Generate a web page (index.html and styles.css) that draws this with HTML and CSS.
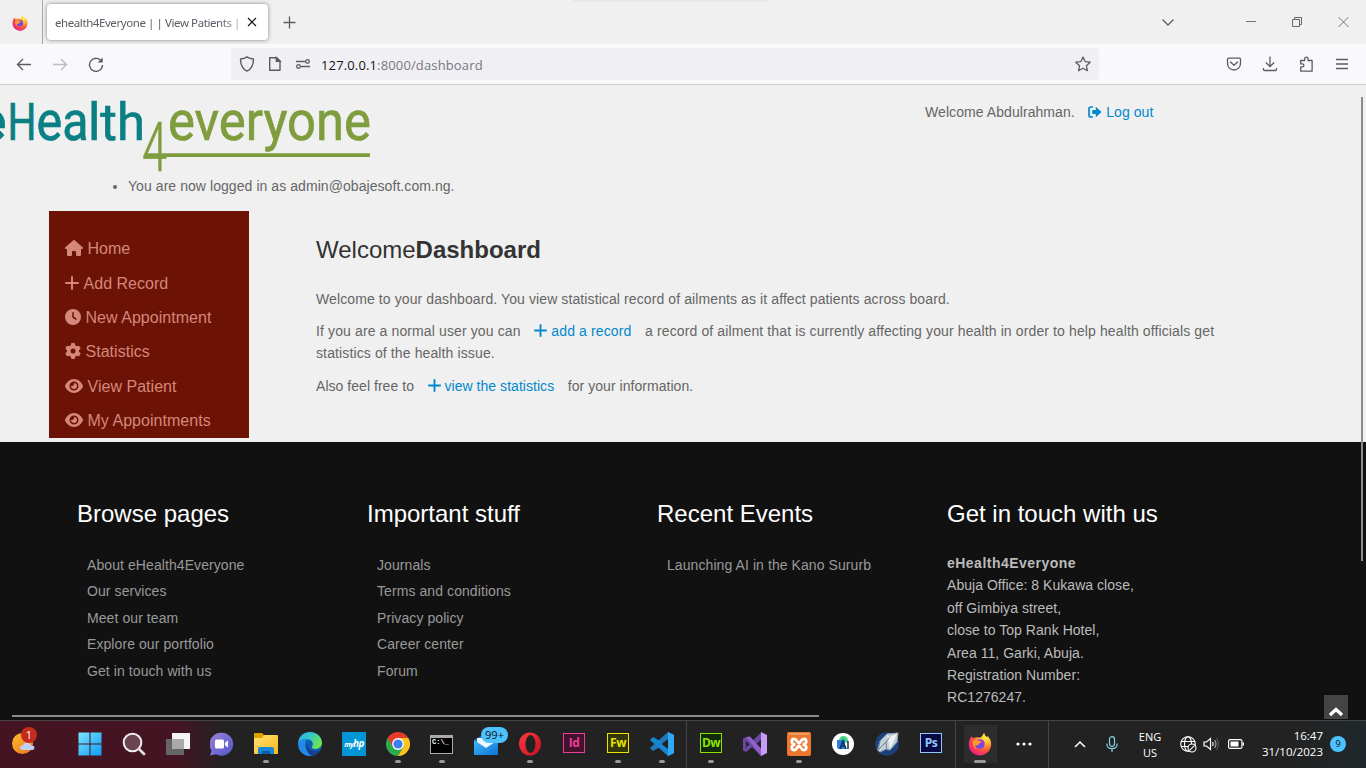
FILE: index.html
```html
<!DOCTYPE html>
<html lang="en">
<head>
<meta charset="utf-8">
<title>ehealth4Everyone | | View Patients</title>
<link rel="stylesheet" href="styles.css">
</head>
<body>
<svg class="defs" width="0" height="0" aria-hidden="true">
  <defs>
    <radialGradient id="fxBody" cx=".75" cy=".2" r=".95"><stop offset="0" stop-color="#fff14a"/><stop offset=".3" stop-color="#ffb52c"/><stop offset=".6" stop-color="#ff553f"/><stop offset="1" stop-color="#e9128a"/></radialGradient>
    <linearGradient id="fxCore" x1="0" y1="1" x2="1" y2="0"><stop offset="0" stop-color="#5a4fe0"/><stop offset="1" stop-color="#a83ad6"/></linearGradient>
    <linearGradient id="winG" x1="0" y1="0" x2="1" y2="1"><stop offset="0" stop-color="#7be6ff"/><stop offset="1" stop-color="#0f9af5"/></linearGradient>
    <linearGradient id="edgeA" x1="0" y1="0" x2="1" y2=".5"><stop offset="0" stop-color="#2aaee8"/><stop offset=".5" stop-color="#36c6c8"/><stop offset="1" stop-color="#69e64d"/></linearGradient>
    <linearGradient id="folderG" x1="0" y1="0" x2="1" y2="1"><stop offset="0" stop-color="#ffe17a"/><stop offset="1" stop-color="#fdb913"/></linearGradient>
    <linearGradient id="sunG" x1="0" y1="0" x2="1" y2="1"><stop offset="0" stop-color="#fbbc2c"/><stop offset="1" stop-color="#ec7420"/></linearGradient>
    <linearGradient id="chatG" x1="0" y1="0" x2="1" y2="1"><stop offset="0" stop-color="#9d7fd8"/><stop offset="1" stop-color="#5059c9"/></linearGradient>
    <linearGradient id="opG" x1="0" y1="0" x2="1" y2="1"><stop offset="0" stop-color="#ff3b45"/><stop offset="1" stop-color="#c2101f"/></linearGradient>
    <linearGradient id="mailG" x1="0" y1="0" x2="1" y2="1"><stop offset="0" stop-color="#40b8f5"/><stop offset="1" stop-color="#0c74d6"/></linearGradient>
    <symbol id="firefox" viewBox="0 0 24 24">
      <path fill="url(#fxBody)" d="M3.500 4.200 5.600 6.300C7 5.200 8.300 5 9.600 5.400c1 .2 2.300.3 3.600-.5C14.600 3.900 15 2.200 16.200.6c.2 2.300 1.400 3.400 2.800 4.600l.7-1.300c2.300 2.400 3.700 5.200 3.500 8.700C22.900 18.900 18.100 23.500 12 23.500S.8 18.900.8 12.800c0-3.500 1-6.300 2.700-8.600Z"/>
      <circle cx="12" cy="12" r="4.800" fill="url(#fxCore)"/>
      <path fill="#ff9a2b" d="M5 8.600c2.300-1.100 4.200-.6 5.700.2 1.500 0 2.900.1 2.600 1.100-.5 1-2.300 1-2.600 2-.3 1.600-2 1.800-3.400.9-.5 2.200.2 3.800 2.200 5C6.300 17 4 12.500 5 8.600Z"/>
    </symbol>
    <symbol id="plus" viewBox="0 0 14 14"><path d="M7 1v12M1 7h12" fill="none" stroke="currentColor" stroke-width="2" stroke-linecap="round"/></symbol>
    <symbol id="eye" viewBox="0 0 576 512"><path fill="currentColor" d="M288 32c-80.8 0-145.5 36.800-192.600 80.600C48.600 156 17.300 208 2.500 243.700c-3.300 7.900-3.300 16.700 0 24.600C17.300 304 48.600 356 95.400 399.400C142.500 443.200 207.200 480 288 480s145.500-36.800 192.600-80.600c46.800-43.500 78.100-95.400 93-131.100c3.300-7.900 3.300-16.700 0-24.600c-14.900-35.700-46.200-87.700-93-131.100C433.500 68.800 368.800 32 288 32zM144 256a144 144 0 1 1 288 0 144 144 0 1 1 -288 0zm144-64c0 35.300-28.700 64-64 64c-7.100 0-13.900-1.200-20.300-3.300c-5.500-1.800-11.900 1.600-11.700 7.400c.3 6.900 1.300 13.800 3.200 20.700c13.700 51.200 66.400 81.600 117.600 67.900s81.600-66.400 67.900-117.600c-11.100-41.500-47.800-69.400-88.600-71.100c-5.800-.2-9.200 6.100-7.400 11.700c2.100 6.400 3.300 13.200 3.300 20.300z"/></symbol>
  </defs>
</svg>

<header class="tabbar">
  <div class="pinned"><svg width="16" height="16"><use href="#firefox"/></svg></div>
  <div class="tab"><span class="tab-title">ehealth4Everyone | | View Patients |</span>
    <svg width="10" height="10" viewBox="0 0 10 10"><path d="M1 1l8 8M9 1 1 9" stroke="#15141a" stroke-width="1.200"/></svg></div>
  <svg class="newtab" width="13" height="13" viewBox="0 0 13 13"><path d="M6.500.5v12M.5 6.500h12" stroke="#5b5b66" stroke-width="1.300"/></svg>
  <div class="topline"></div>
  <div class="wincontrols">
    <svg width="14" height="14" viewBox="0 0 14 14"><path d="m1.500 4.500 5.500 5.500 5.500-5.500" fill="none" stroke="#5b5b66" stroke-width="1.300"/></svg>
    <svg width="10" height="14" viewBox="0 0 10 14"><path d="M0 6.500h10" stroke="#777" /></svg>
    <svg width="10" height="14" viewBox="0 0 10 14"><path d="M.5 4.500h7v7h-7zM2.500 4.500v-2h7v7h-2" fill="none" stroke="#666"/></svg>
    <svg width="11" height="14" viewBox="0 0 11 14"><path d="m.5 2 10 10M10.500 2l-10 10" stroke="#777"/></svg>
  </div>
</header>

<nav class="toolbar">
  <div class="navbuttons">
    <svg width="16" height="16" viewBox="0 0 16 16" fill="none" stroke="#5b5b66" stroke-width="1.400"><path d="M15 8.500H1.500M7 3 1.500 8.500 7 14"/></svg>
    <svg width="16" height="16" viewBox="0 0 16 16" fill="none" stroke="#bcbcc2" stroke-width="1.400"><path d="M1 8.500h13.500M9 3l5.500 5.500L9 14"/></svg>
    <svg width="16" height="16" viewBox="0 0 16 16" fill="none" stroke="#5b5b66" stroke-width="1.400"><path d="M13.600 5.500A6.500 6.500 0 1 0 14.500 9"/><path d="M14.700 1.500v5h-5z" fill="#5b5b66" stroke="none"/></svg>
  </div>
  <div class="urlbar">
    <svg width="16" height="16" viewBox="0 0 16 16" fill="none" stroke="#5b5b66" stroke-width="1.400"><path d="M8 .9c1.800 1.400 4 2 6.500 2.100 0 6-1.800 10-6.500 12.100C3.300 13 1.500 9 1.500 3 4 2.900 6.200 2.300 8 .9Z" stroke-linejoin="round"/></svg>
    <svg width="16" height="16" viewBox="0 0 16 16" fill="none" stroke="#5b5b66" stroke-width="1.400"><path d="M2.700 1.700h7l3.300 3.300v9.300H2.700Z" stroke-linejoin="round"/><path d="M9.300 1.700v3.600H13z" fill="#5b5b66"/></svg>
    <svg width="16" height="16" viewBox="0 0 16 16" fill="none" stroke="#5b5b66" stroke-width="1.300"><path d="M1 5.500h9M6 10.500h9"/><circle cx="12.500" cy="5.500" r="1.800"/><circle cx="3.500" cy="10.500" r="1.800"/></svg>
    <span class="url"><b>127.0.0.1</b>:8000/dashboard</span>
    <svg class="star" width="16" height="16" viewBox="0 0 16 16" fill="none" stroke="#5b5b66" stroke-width="1.300" stroke-linejoin="round"><path d="m8 1 2.100 4.600 5.100.6-3.800 3.500 1 5L8 12.200l-4.400 2.500 1-5L.8 6.200l5.100-.6z"/></svg>
  </div>
  <div class="tools">
    <svg width="16" height="16" viewBox="0 0 16 16" fill="none" stroke="#5b5b66" stroke-width="1.300" stroke-linejoin="round"><path d="M2.500 2.200h11q1 0 1 1V7.500a6.500 6.500 0 0 1-13 0V3.200q0-1 1-1Z"/><path d="m4.500 6 3.500 3.300L11.500 6" stroke-linecap="round"/></svg>
    <svg width="16" height="16" viewBox="0 0 16 16" fill="none" stroke="#5b5b66" stroke-width="1.300"><path d="M8 .5v10M3.800 6.500 8 10.700l4.200-4.200M1.500 12v1.500q0 1 1 1h11q1 0 1-1V12"/></svg>
    <svg width="16" height="16" viewBox="0 0 16 16" fill="none" stroke="#5b5b66" stroke-width="1.300" stroke-linejoin="round"><path d="M2.700 4.500h4V2.800a1.700 1.700 0 0 1 3.400 0v1.700h4v10.700H2.700v-4.300h1.700a1.500 1.500 0 0 0 0-3H2.700Z"/></svg>
    <svg width="16" height="16" viewBox="0 0 16 16" stroke="#5b5b66" stroke-width="1.300"><path d="M2 3.500h12M2 8h12M2 12.500h12"/></svg>
  </div>
</nav>

<main class="page">
  <section class="masthead">
    <svg class="logo" width="372" height="92" viewBox="0 0 372 92">
      <g fill="#0b8084" stroke="#0b8084" stroke-width=".7">
        <text class="mark bold" x="-23" y="55" textLength="29" lengthAdjust="spacingAndGlyphs">e</text>
        <text class="mark cap" x="7.500" y="55" textLength="29" lengthAdjust="spacingAndGlyphs">H</text>
        <text class="mark" x="36.500" y="55" textLength="52" lengthAdjust="spacingAndGlyphs">ea</text>
        <text class="mark tall" x="88" y="55" textLength="57" lengthAdjust="spacingAndGlyphs">lth</text>
      </g>
      <g fill="#7f9d3e" stroke="#7f9d3e" stroke-width=".7">
        <text class="mark four" x="142" y="85.500" textLength="25" lengthAdjust="spacingAndGlyphs">4</text>
        <text class="mark" x="168" y="55" textLength="203" lengthAdjust="spacingAndGlyphs">everyone</text>
        <path d="M146 70.200H370" stroke-width="3.800"/>
      </g>
    </svg>
    <div class="account">Welcome Abdulrahman.
      <a class="logout"><svg width="14" height="12" viewBox="0 0 14 12"><path d="M5 1H3Q1 1 1 3v6q0 2 2 2h2" fill="none" stroke="currentColor" stroke-width="1.700"/><path d="M4.300 4h3.500V.8L13.500 6 7.800 11.200V8H4.300z" fill="currentColor"/></svg>Log out</a></div>
  </section>
  <ul class="messages"><li>You are now logged in as admin@obajesoft.com.ng.</li></ul>
  <section class="body">
    <aside class="sidebar">
      <a><svg width="18" height="16" viewBox="0 0 576 512"><path fill="currentColor" d="M575.800 255.500c0 18-15 32.100-32 32.100h-32l.7 160.200c0 2.700-.2 5.400-.5 8.100V472c0 22.100-17.900 40-40 40H392c-22.100 0-40-17.900-40-40V384c0-17.700-14.300-32-32-32H256c-17.700 0-32 14.300-32 32v88c0 22.100-17.900 40-40 40H104c-22.100 0-40-17.900-40-40V287.600H32c-18 0-32-14-32-32.100c0-9 3-17 10-24L266.400 8c7-7 15-8 22-8s15 2 21 7L564.800 231.500c8 7 12 15 11 24z"/></svg>Home</a>
      <a><svg class="low" width="14" height="14"><use href="#plus"/></svg>Add Record</a>
      <a><svg width="16" height="16" viewBox="0 0 512 512"><path fill="currentColor" d="M256 0a256 256 0 1 1 0 512A256 256 0 1 1 256 0zM232 120V256c0 8 4 15.500 10.700 20l96 64c11 7.400 25.900 4.400 33.300-6.700s4.400-25.900-6.700-33.300L280 243.200V120c0-13.300-10.700-24-24-24s-24 10.700-24 24z"/></svg>New Appointment</a>
      <a><svg width="16" height="16" viewBox="0 0 512 512"><path fill="currentColor" d="M495.900 166.600c3.200 8.700 .5 18.400-6.400 24.600l-43.300 39.400c1.100 8.300 1.700 16.800 1.700 25.400s-.6 17.100-1.700 25.400l43.300 39.400c6.900 6.200 9.600 15.900 6.400 24.600c-4.400 11.900-9.700 23.300-15.800 34.300l-4.700 8.100c-6.600 11-14 21.400-22.100 31.200c-5.900 7.200-15.700 9.600-24.500 6.800l-55.700-17.700c-13.400 10.300-28.200 18.900-44 25.400l-12.500 57.100c-2 9.100-9 16.300-18.200 17.800c-13.800 2.300-28 3.500-42.500 3.500s-28.700-1.200-42.500-3.500c-9.200-1.500-16.200-8.700-18.200-17.800l-12.500-57.100c-15.800-6.500-30.600-15.100-44-25.400L83.100 425.900c-8.800 2.800-18.600 .3-24.500-6.800c-8.100-9.800-15.500-20.200-22.100-31.200l-4.700-8.100c-6.100-11-11.400-22.400-15.800-34.300c-3.200-8.700-.5-18.400 6.400-24.600l43.300-39.400C64.600 273.100 64 264.600 64 256s.6-17.100 1.700-25.400L22.400 191.200c-6.900-6.200-9.600-15.900-6.400-24.600c4.400-11.900 9.700-23.300 15.800-34.300l4.700-8.100c6.600-11 14-21.400 22.100-31.200c5.900-7.200 15.700-9.600 24.500-6.800l55.700 17.700c13.400-10.300 28.200-18.900 44-25.400l12.500-57.100c2-9.100 9-16.300 18.200-17.800C227.300 1.200 241.500 0 256 0s28.700 1.200 42.500 3.500c9.200 1.500 16.200 8.700 18.200 17.800l12.500 57.100c15.800 6.500 30.600 15.100 44 25.400l55.700-17.700c8.800-2.800 18.600-.3 24.500 6.800c8.100 9.800 15.500 20.200 22.100 31.200l4.700 8.100c6.100 11 11.400 22.400 15.800 34.300zM256 336a80 80 0 1 0 0-160 80 80 0 1 0 0 160z"/></svg>Statistics</a>
      <a><svg width="18" height="16"><use href="#eye"/></svg>View Patient</a>
      <a><svg width="18" height="16"><use href="#eye"/></svg>My Appointments</a>
    </aside>
    <article class="content">
      <h1>Welcome<strong>Dashboard</strong></h1>
      <p>Welcome to your dashboard. You view statistical record of ailments as it affect patients across board.</p>
      <p class="wide">If you are a normal user you can <a><svg width="13" height="13"><use href="#plus"/></svg> add a record</a> a record of ailment that is currently affecting your health in order to help health officials get statistics of the health issue.</p>
      <p class="tight">Also feel free to <a><svg width="13" height="13"><use href="#plus"/></svg> view the statistics</a> for your information.</p>
    </article>
  </section>
  <footer class="footer">
    <section><h2>Browse pages</h2><ul><li>About eHealth4Everyone</li><li>Our services</li><li>Meet our team</li><li>Explore our portfolio</li><li>Get in touch with us</li></ul></section>
    <section><h2>Important stuff</h2><ul><li>Journals</li><li>Terms and conditions</li><li>Privacy policy</li><li>Career center</li><li>Forum</li></ul></section>
    <section><h2>Recent Events</h2><ul><li>Launching AI in the Kano Sururb</li></ul></section>
    <section><h2>Get in touch with us</h2><address><strong>eHealth4Everyone</strong><br>Abuja Office: 8 Kukawa close,<br>off Gimbiya street,<br>close to Top Rank Hotel,<br>Area 11, Garki, Abuja.<br>Registration Number:<br>RC1276247.</address></section>
  </footer>
  <div class="vscroll"></div><div class="hscroll"></div>
  <div class="totop"><svg width="16" height="12" viewBox="0 0 16 12"><path d="m2 9 6-5.500L14 9" fill="none" stroke="#fff" stroke-width="3.200"/></svg></div>
</main>

<footer class="taskbar">
  <div class="weather"><svg width="28" height="30" viewBox="0 0 28 30"><circle cx="11.500" cy="15.500" r="10.500" fill="url(#sunG)"/><path d="M11.500 22q-2.500 0-2.500-2.300t3-2.400q1.500-3.800 5-2.800 2.300.6 3 3 3.500 0 3.500 2.300T21 22z" fill="#bfd0f5"/></svg><span class="count">1</span></div>
  <div class="apps">
    <div class="app"><svg width="24" height="24" viewBox="0 0 24 24"><path fill="url(#winG)" d="M.5.500h11v11H.5zm12 0h11v11h-11zM.5 12.500h11v11H.5zm12 0h11v11h-11z"/></svg></div>
    <div class="app"><svg width="24" height="24" viewBox="0 0 24 24"><circle cx="10.500" cy="10.500" r="8.800" fill="#6c4350" stroke="#eee" stroke-width="2"/><path d="m17 17 5 5" stroke="#ddd" stroke-width="2.800" stroke-linecap="round"/></svg></div>
    <div class="app"><svg width="24" height="24" viewBox="0 0 24 24"><path fill="#f4f4f4" d="M6 1h18v16H6z"/><path fill="#666" d="M0 7h18v16H0z"/><path fill="#aaa" d="M6 7h12v10H6z"/></svg></div>
    <div class="app"><svg width="24" height="24" viewBox="0 0 24 24"><path fill="url(#chatG)" d="M12 .7a11.500 11.500 0 1 1-6 21.500L0 23.500l1.500-5A11.500 11.500 0 0 1 12 .7Z"/><rect x="5" y="7.500" width="9" height="9" rx="1.500" fill="#fff"/><path d="m15 10.800 3-2.300v7l-3-2.300z" fill="#fff"/></svg></div>
    <div class="app run"><svg width="26" height="24" viewBox="0 0 26 24"><path fill="#dfa100" d="M1 2q0-1 1-1h7l2 2v5H1z"/><path fill="url(#folderG)" d="M1 6h8l2-3h13q1 0 1 1v17q0 1-1 1H2q-1 0-1-1z"/><path fill="#1687d9" d="M5 22v-5q0-2 2-2h12q2 0 2 2v5z"/><path fill="#0b60a8" d="M9 19h8v3H9z"/></svg></div>
    <div class="app"><svg width="24" height="24" viewBox="0 0 24 24"><circle cx="12" cy="12" r="12" fill="#0d5fb5"/><path fill="url(#edgeA)" d="M.2 10.500C1 4 6 0 12 0c7 0 12 5.200 12 10.800 0 4-3.200 6.200-6.500 6.200-3 0-4.200-1.500-3.200-2.800 1.600-2.200.2-5.700-3.500-6.600C6.500 6.500 2 8 .2 10.500Z"/><path fill="#218be5" d="M.2 10.500C2 8 5.500 7 9 7.400 5.700 10 6.500 18 14 23.800 6 25-.5 19 .2 10.500Z"/><path fill="#173f8f" d="M9.500 11c-1 5 4 9.300 12 7.500-2 3.300-4.500 4.800-7.500 5.300C7.500 20.500 7 14 9.500 11Z"/></svg></div>
    <div class="app"><span class="hp"><small>my</small>hp</span></div>
    <div class="app run"><svg width="24" height="24" viewBox="0 0 24 24"><path d="M12 12 1.600 6A12 12 0 0 1 22.400 6z" fill="#e33b2e"/><path d="M12 12v12A12 12 0 0 1 1.600 6z" fill="#2da94f"/><path d="M1.600 6 7 15l5-9z" fill="#e33b2e"/><path d="m12 24 5.200-9H7z" fill="#2da94f"/><path d="m17.200 15-5.200 9a12 12 0 0 0 10.400-18H12z" fill="#fcc31e"/><circle cx="12" cy="12" r="5.900" fill="#fff"/><circle cx="12" cy="12" r="4.600" fill="#3d7ff0"/></svg></div>
    <div class="app run"><span class="cmd">C:\_</span></div>
    <div class="app mail"><svg width="26" height="24" viewBox="0 0 26 24"><path fill="#136fc0" d="M1 8 13 1l12 7v15H1z"/><path fill="#eef7ff" d="M4 6h18v8l-9 4-9-6z"/><path fill="url(#mailG)" d="m1 8 12 8 12-8v15H1z"/></svg><span class="badge">99+</span></div>
    <div class="app run"><svg width="24" height="24" viewBox="0 0 24 24"><ellipse cx="12" cy="12" rx="11" ry="11.500" fill="url(#opG)"/><ellipse cx="12.500" cy="12" rx="5" ry="9" fill="#222"/></svg></div>
    <div class="app"><span class="adobe id">Id</span></div>
    <div class="app run"><span class="adobe fw">Fw</span></div>
    <div class="app run"><svg width="24" height="24" viewBox="0 0 24 24"><path fill="#1f79bf" d="m18 0 6 3v4L3 19 0 16z"/><path fill="#1688d2" d="M18 24 0 8l3-3 21 12v4z"/><path fill="#2faaf2" d="m18 0 6 3v18l-6 3z"/><path d="m18 7-6.500 5 6.500 5z" fill="#222"/></svg></div>
    <i class="sep"></i>
    <div class="app run"><span class="adobe dw">Dw</span></div>
    <div class="app"><svg width="24" height="24" viewBox="0 0 24 24"><path fill="#6a47a0" d="M0 6.500 3 5l4.500 1L20 18l-2 6L3 9v6.500l15-15V8L3 20l-3-1.500z"/><path fill="#8f62c9" d="m3 5 4-.5L20 19l-2 5z"/><path fill="#c79cf5" d="m18 0 6 3v18l-6 3z"/></svg></div>
    <div class="app run"><svg width="24" height="24" viewBox="0 0 24 24"><rect width="24" height="24" rx="2" fill="#ed772d"/><path fill="#f39b67" d="M1 1h22l-2 2H3z"/><path d="M8.500 12.500C4 12.500 3.500 7 7 7s3 4 5 4 1.500-4 5-4 3 5.500-1.500 5.500c4.500 0 5 5.500 1.500 5.500s-3-4-5-4-1.500 4-5 4-3-5.500 1.500-5.500Z" fill="none" stroke="#fff" stroke-width="2.800"/></svg></div>
    <div class="app"><svg width="22" height="22" viewBox="0 0 22 22"><circle cx="11" cy="11" r="11" fill="#fff"/><path d="M7 8a4.500 4.500 0 0 1 9-1v3z" fill="#43d681"/><path d="M5 7h8v9H7q-2 0-2-2z" fill="#2c7be5"/><path d="m8 16 3-8 3 8M9 13h4M16 8v8" fill="none" stroke="#123052" stroke-width="1.500"/></svg></div>
    <div class="app"><svg width="26" height="24" viewBox="0 0 26 24"><circle cx="13" cy="12" r="11.800" fill="#1d417d"/><path d="m3.500 18 2.500-9 7-7 11-1-1 9-7 8-4-1-6 3z" fill="#c3d0da" stroke="#8fa3b5"/><path d="m13 2 2.500 3.500L23.500 1 16 17z" fill="#eef3f6"/><path d="M6 9 4 18l8-8 3.500-4.500M12 10l.5 7" stroke="#6c8094" fill="none"/></svg></div>
    <div class="app"><span class="adobe ps">Ps</span></div>
    <i class="sep"></i>
    <div class="app active run"><svg width="24" height="24"><use href="#firefox"/></svg></div>
    <div class="app"><svg width="16" height="4" viewBox="0 0 16 4" fill="#fff"><circle cx="2" cy="2" r="1.600"/><circle cx="8" cy="2" r="1.600"/><circle cx="14" cy="2" r="1.600"/></svg></div>
    <i class="sep"></i>
  </div>
  <div class="tray">
    <svg class="chev" width="12" height="8" viewBox="0 0 12 8"><path d="m1 7 5-5 5 5" fill="none" stroke="#fff" stroke-width="1.500"/></svg>
    <svg class="mic" width="12" height="16" viewBox="0 0 12 16" fill="none" stroke="#84cfe3" stroke-width="1.200"><rect x="3.500" y=".7" width="5" height="9.600" rx="2.500"/><path d="M.8 7.500Q.8 12.700 6 12.700T11.200 7.500M6 12.700V16"/></svg>
    <div class="lang">ENG<br>US</div>
    <svg class="globe" width="17" height="17" viewBox="0 0 17 17" fill="none" stroke="#fff" stroke-width="1.100"><circle cx="8" cy="8" r="7.300"/><ellipse cx="8" cy="8" rx="3.500" ry="7.300"/><path d="M1.200 5.500h13.600M1.200 10.500h13.600"/><circle cx="12" cy="12" r="4" fill="#222"/><path d="m9.300 14.700 5.400-5.400"/></svg>
    <svg class="vol" width="17" height="14" viewBox="0 0 17 14" fill="none" stroke="#fff" stroke-width="1.200"><path d="M1 5h2.500L7.500 1.500v11L3.500 9H1zM9.500 5q1.500 2 0 4"/><path d="M11.500 3q3 4 0 8" stroke="#aaa"/><path d="M13.500 1q4 6 0 12" stroke="#555"/></svg>
    <svg class="bat" width="17" height="10" viewBox="0 0 17 10"><rect x=".6" y=".6" width="13.300" height="8.800" rx="1.500" fill="none" stroke="#fff" stroke-width="1.200"/><path fill="#fff" d="M2.500 2.500h8v5h-8zM14.500 3.500H16v3h-1.500z"/></svg>
    <div class="clock">16:47<br>31/10/2023</div>
    <span class="notif">9</span>
  </div>
</footer>
</body>
</html>
```
FILE: styles.css
```css
* { box-sizing: border-box; }
body {
  margin: 0;
  width: 1366px;
  height: 768px;
  overflow: hidden;
  display: flex;
  flex-direction: column;
  font-family: "Liberation Sans", Arial, sans-serif;
}
.defs { position: absolute; }
svg { flex: none; }

/* Browser window */
.tabbar {
  position: relative;
  display: flex;
  align-items: center;
  height: 44px;
  flex: none;
  background: #f0f0f0;
  font-family: "Noto Sans", sans-serif;
}
.pinned {
  width: 43px;
  height: 44px;
  padding: 14px 0 0 12px;
  border-right: 1px solid #aaa;
}
.tab {
  display: flex;
  align-items: center;
  width: 221px;
  height: 36px;
  margin-left: 4px;
  padding: 0 11px 0 8px;
  border-radius: 4px;
  background: #fff;
  box-shadow: 0 0 4px rgba(0, 0, 0, .45);
}
.tab-title {
  width: 192px;
  overflow: hidden;
  white-space: nowrap;
  font-size: 11.5px;
  letter-spacing: -.42px;
  color: #5b5b66;
  -webkit-mask-image: linear-gradient(90deg, #000 165px, transparent 200px);
  mask-image: linear-gradient(90deg, #000 165px, transparent 200px);
}
.newtab { margin-left: 15px; }
.topline {
  position: absolute;
  left: 572px;
  top: 0;
  width: 196px;
  height: 2px;
  background: #e9e9e9;
  border-radius: 0 0 3px 3px;
}
.wincontrols {
  display: flex;
  margin-left: auto;
  padding-right: 17px;
  align-items: center;
}
.wincontrols svg + svg { margin-left: 36px; }
.wincontrols svg:nth-child(2) { margin-left: 71px; }
.toolbar {
  display: flex;
  align-items: center;
  height: 41px;
  flex: none;
  background: #f9f9fb;
  border-bottom: 1px solid #ccccd1;
}
.navbuttons { display: flex; gap: 20px; width: 231px; padding-left: 16px; }
.urlbar {
  display: flex;
  align-items: center;
  width: 868px;
  height: 32px;
  padding: 0 8px;
  gap: 12px;
  border-radius: 4px;
  background: #f0f0f4;
}
.url {
  margin-left: -2px;
  padding-top: 1px;
  font: 13px "Open Sans", sans-serif;
  letter-spacing: .14px;
  color: #77777f;
}
.url b { font-weight: 400; color: #15141a; }
.star { margin-left: auto; }
.tools { display: flex; gap: 20px; margin-left: auto; padding-right: 16px; }

/* Site */
.page {
  position: relative;
  display: flex;
  flex-direction: column;
  height: 635px;
  flex: none;
  overflow: hidden;
  background: #f0f0f0;
  color: #666;
  font-size: 14px;
  line-height: 22.4px;
}
.masthead { display: flex; height: 90px; flex: none; justify-content: space-between; }
.logo { overflow: hidden; }
.mark { font: 400 56px Roboto, sans-serif; }
.mark.cap { font-size: 51px; }
.mark.tall { font-size: 52px; }
.mark.bold { font-weight: 700; }
.mark.four { font-size: 68px; font-weight: 300; }
.account { width: 441px; padding-top: 16px; letter-spacing: .07px; }
.account a, .content a { color: #0088cc; }
.logout { margin-left: 9.5px; }
.logout svg { margin-right: 4px; vertical-align: -1px; }
.messages { margin: 0; height: 36px; flex: none; padding-left: 128px; letter-spacing: .065px; }
.body { display: flex; height: 231px; flex: none; padding-left: 49px; }
.sidebar {
  width: 200px;
  height: 227px;
  padding: 21.3px 16px 0;
  background: #6c1305;
  color: #d5877b;
  font-size: 16px;
  letter-spacing: .03px;
}
.sidebar a { display: flex; align-items: center; height: 34.4px; gap: 4.5px; }
.sidebar svg { margin-top: -3px; }
.sidebar svg.low { margin-top: -1px; }
.content { width: 920px; padding-right: 10px; margin-left: 67px; }
.content h1 {
  margin: 23px 0 22px;
  font-size: 24px;
  line-height: 32px;
  font-weight: 400;
  color: #333;
}
.content p { margin: 0 0 10.4px; line-height: 22px; letter-spacing: .1px; }
.content p.wide { letter-spacing: .12px; }
.content p.tight { letter-spacing: .04px; }
.content a { margin: 0 9.7px; }
.content p svg { vertical-align: -1px; }
.footer {
  flex: 1;
  display: grid;
  grid-template-columns: repeat(4, 290px);
  align-content: start;
  padding: 56px 0 0 77px;
  background: #111;
  color: #999;
}
.footer h2 {
  margin: 0 0 24px;
  font-size: 24px;
  line-height: 32px;
  font-weight: 400;
  color: #fff;
}
.footer ul { margin: 0; padding: 0 0 0 10px; list-style: none; letter-spacing: .08px; }
.footer li { height: 26.4px; }
.footer address { margin-top: -2px; font-style: normal; color: #bbb; letter-spacing: .04px; }
.footer strong { letter-spacing: .48px; }
.vscroll { position: absolute; left: 1361px; top: 12px; width: 2px; height: 464px; background: #8b8b8b; }
.hscroll { position: absolute; left: 12px; top: 630px; width: 807px; height: 2px; background: #8b8b8b; }
.totop {
  position: absolute;
  left: 1324px;
  top: 610px;
  display: flex;
  align-items: flex-end;
  justify-content: center;
  width: 24px;
  height: 24px;
  padding-bottom: 1px;
  background: #444;
}

/* Desktop taskbar */
.taskbar {
  display: flex;
  height: 48px;
  flex: none;
  border-top: 1px solid #454545;
  background: linear-gradient(90deg, #451422 0, #451422 175px, #222 225px, #222 1290px, #20282b 1366px);
  color: #fff;
  font-family: "Open Sans", sans-serif;
}
.weather { position: relative; width: 68px; padding: 7px 0 0 11px; }
.count {
  position: absolute;
  left: 21px;
  top: 6px;
  width: 16px;
  height: 16px;
  border-radius: 50%;
  background: #c42b1c;
  font-size: 11px;
  line-height: 16px;
  text-align: center;
}
.apps { display: flex; }
.app { position: relative; display: flex; width: 44px; height: 46px; align-items: center; justify-content: center; }
.run::after {
  content: "";
  position: absolute;
  left: 19px;
  top: 39px;
  width: 6px;
  height: 3px;
  border-radius: 2px;
  background: #999;
}
.active { background: linear-gradient(#2d2d2d, #2d2d2d) center / 33px 38px no-repeat; }
.active::after { left: 16px; width: 12px; }
.sep { width: 1px; margin: 0 2px; background: #444; }
.hp {
  width: 24px;
  height: 24px;
  background: #0096d6;
  font: italic 700 10px/23px "Open Sans", sans-serif;
  letter-spacing: -.6px;
  text-align: center;
}
.hp small { font-size: 7px; }
.cmd {
  width: 23px;
  height: 19px;
  margin-right: 1px;
  border: 1px solid #aaa;
  border-top-width: 3px;
  background: #000;
  font: 700 7px/9px "Liberation Mono", monospace;
  padding-left: 1px;
}
.badge {
  position: absolute;
  left: 17px;
  top: 6px;
  width: 27px;
  height: 16px;
  border-radius: 8px;
  background: #4cc2ff;
  color: #111;
  font-size: 11px;
  line-height: 16px;
  text-align: center;
}
.adobe {
  width: 22px;
  height: 20px;
  margin-top: -3px;
  border: 1.5px solid;
  font: 700 12px/18px "Open Sans", sans-serif;
  text-align: center;
  letter-spacing: -.5px;
}
.id { color: #e83e99; background: #43112c; }
.fw { color: #e6e600; background: #33350b; }
.dw { color: #8fe000; background: #10290b; }
.ps { color: #8cc8ff; background: #0b0843; }
.tray { display: flex; align-items: center; height: 46px; font-size: 11px; line-height: 16px; }
.chev { margin-left: 23px; }
.mic { margin-left: 20px; }
.lang { width: 28px; margin-left: 18px; padding-top: 1px; text-align: center; }
.globe { margin-left: 16px; }
.vol { margin-left: 6px; }
.bat { margin-left: 8px; }
.clock { width: 66px; margin-left: 12px; text-align: right; white-space: nowrap; font-size: 11.5px; }
.notif {
  width: 16px;
  height: 16px;
  margin-left: 7px;
  border-radius: 50%;
  background: #4cc2ff;
  color: #111;
  font-size: 9px;
  text-align: center;
}
```
